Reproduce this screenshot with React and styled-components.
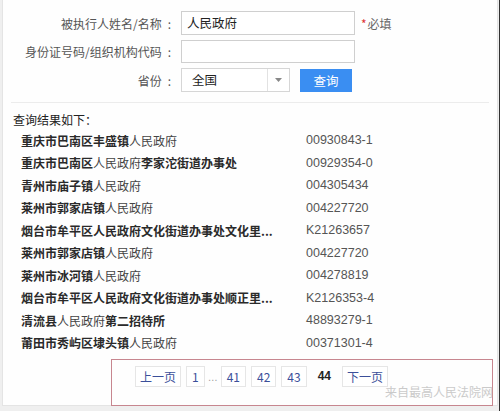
import React from 'react';
import styled, { createGlobalStyle } from 'styled-components';

const Global = createGlobalStyle`
  html, body {
    margin: 0;
    padding: 0;
  }
  body {
    width: 500px;
    height: 411px;
    overflow: hidden;
    background: linear-gradient(to right, #efefef 499px, #333 499px);
    font-family: "Liberation Sans", Arial, "Noto Sans CJK SC", sans-serif;
  }
`;

const Panel = styled.div`
  position: relative;
  box-sizing: border-box;
  margin-left: 2px;
  width: 496px;
  height: 406px;
  background: #fefefe;
  border: 1px solid #e4e4e4;
  border-top: none;
  padding-top: 11px;
`;

const Form = styled.div`
  display: flex;
  flex-direction: column;
  gap: 5px;
`;

const Row = styled.div`
  display: flex;
  align-items: center;
  height: ${p => p.h || 24}px;
`;

const Label = styled.div`
  width: 170px;
  box-sizing: border-box;
  text-align: right;
  font-size: 12px;
  color: #555;
  padding-right: 2px;
  font-family: "Noto Sans CJK SC", sans-serif;
  span {
    margin-left: 6px;
  }
`;

const Input = styled.div`
  box-sizing: border-box;
  margin-left: 8px;
  width: 174px;
  height: 100%;
  border: 1px solid #cfcfcf;
  background: #fff;
  padding-left: 5px;
  font-size: 12.5px;
  line-height: 22px;
  color: #222;
  font-family: "Noto Sans CJK SC", sans-serif;
`;

const Required = styled.span`
  margin-left: 6px;
  font-size: 12px;
  color: #666;
  font-family: "Noto Sans CJK SC", sans-serif;
  b {
    color: #d33;
    font-weight: normal;
    margin-right: 1px;
  }
`;

const Select = styled.div`
  box-sizing: border-box;
  margin-left: 8px;
  width: 109px;
  height: 100%;
  border: 1px solid #d6d6d6;
  background: #fff;
  display: flex;
  align-items: stretch;
`;

const SelectText = styled.div`
  flex: 1;
  padding-left: 10px;
  font-size: 12.5px;
  line-height: 22px;
  color: #222;
  font-family: "Noto Sans CJK SC", sans-serif;
`;

const Caret = styled.div`
  width: 21px;
  border-left: 1px solid #e2e2e2;
  display: flex;
  align-items: center;
  justify-content: center;
`;

const Button = styled.div`
  margin-left: 10px;
  width: 52px;
  height: 23px;
  background: #3a8ef2;
  color: #fff;
  font-size: 12.5px;
  display: flex;
  align-items: center;
  justify-content: center;
  font-family: "Noto Sans CJK SC", sans-serif;
`;

const Divider = styled.div`
  margin: 10px 8px 0 8px;
  height: 1px;
  background: #ececec;
`;

const Results = styled.div`
  padding: 7px 0 0 10px;
  font-family: "Noto Sans CJK SC", sans-serif;
`;

const Heading = styled.div`
  font-size: 12px;
  color: #222;
  height: 19px;
  line-height: 19px;
`;

const List = styled.div`
  display: flex;
  flex-direction: column;
`;

const Item = styled.div`
  display: flex;
  align-items: center;
  height: 22.5px;
  padding-left: 8px;
  font-size: 12px;
`;

const Name = styled.div`
  width: 285px;
  font-weight: bold;
  color: #2a2a2a;
  white-space: nowrap;
  em {
    font-style: normal;
    font-weight: normal;
    color: #444;
  }
`;

const Code = styled.div`
  color: #555;
  font-family: "Liberation Sans", Arial, sans-serif;
  font-size: 12.5px;
`;

const Pager = styled.div`
  box-sizing: border-box;
  margin: 5px 0 0 108px;
  width: 382px;
  height: 47px;
  border: 1px solid #c7868f;
  display: flex;
  align-items: flex-start;
  gap: 5px;
  padding: 6px 0 0 23px;
`;

const PageBtn = styled.div`
  box-sizing: border-box;
  height: 21px;
  padding: 0 ${p => p.pad || 5}px;
  border: 1px solid #e6e6e6;
  background: #fff;
  display: flex;
  align-items: center;
  font-size: 12px;
  color: #3b4f9a;
  font-family: "Noto Sans CJK SC", sans-serif;
`;

const Current = styled.span`
  font-size: 12px;
  font-weight: bold;
  color: #222;
  line-height: 21px;
  padding: 0 6px;
`;

const Dots = styled.span`
  font-size: 10px;
  color: #999;
  line-height: 24px;
  margin: 0 -2px;
`;

const Watermark = styled.div`
  position: absolute;
  right: 4px;
  bottom: 5px;
  font-size: 12px;
  color: #cacaca;
  font-family: "Noto Sans CJK SC", sans-serif;
`;

const data = [
  ['重庆市巴南区丰盛镇', '人民政府', '', '00930843-1'],
  ['重庆市巴南区', '人民政府', '李家沱街道办事处', '00929354-0'],
  ['青州市庙子镇', '人民政府', '', '004305434'],
  ['莱州市郭家店镇', '人民政府', '', '004227720'],
  ['烟台市牟平区人民政府文化街道办事处文化里...', '', '', 'K21263657'],
  ['莱州市郭家店镇', '人民政府', '', '004227720'],
  ['莱州市冰河镇', '人民政府', '', '004278819'],
  ['烟台市牟平区人民政府文化街道办事处顺正里...', '', '', 'K2126353-4'],
  ['清流县', '人民政府', '第二招待所', '48893279-1'],
  ['莆田市秀屿区埭头镇', '人民政府', '', '00371301-4'],
];

export default function App() {
  return (
    <>
      <Global />
      <Panel>
        <Form>
          <Row>
            <Label>被执行人姓名/名称<span>:</span></Label>
            <Input>人民政府</Input>
            <Required><b>*</b>必填</Required>
          </Row>
          <Row h={23}>
            <Label>身份证号码/组织机构代码<span>:</span></Label>
            <Input />
          </Row>
          <Row>
            <Label>省份<span>:</span></Label>
            <Select>
              <SelectText>全国</SelectText>
              <Caret>
                <svg width="7" height="4" viewBox="0 0 7 4">
                  <path d="M0 0 L7 0 L3.5 4 Z" fill="#888" />
                </svg>
              </Caret>
            </Select>
            <Button>查询</Button>
          </Row>
        </Form>
        <Divider />
        <Results>
          <Heading>查询结果如下：</Heading>
          <List>
            {data.map(([a, b, c, code], i) => (
              <Item key={i}>
                <Name>
                  {a}
                  {b && <em>{b}</em>}
                  {c}
                </Name>
                <Code>{code}</Code>
              </Item>
            ))}
          </List>
        </Results>
        <Pager>
          <PageBtn pad={4}>上一页</PageBtn>
          <PageBtn>1</PageBtn>
          <Dots>…</Dots>
          <PageBtn>41</PageBtn>
          <PageBtn>42</PageBtn>
          <PageBtn>43</PageBtn>
          <Current>44</Current>
          <PageBtn pad={4}>下一页</PageBtn>
        </Pager>
        <Watermark>来自最高人民法院网</Watermark>
      </Panel>
    </>
  );
}
